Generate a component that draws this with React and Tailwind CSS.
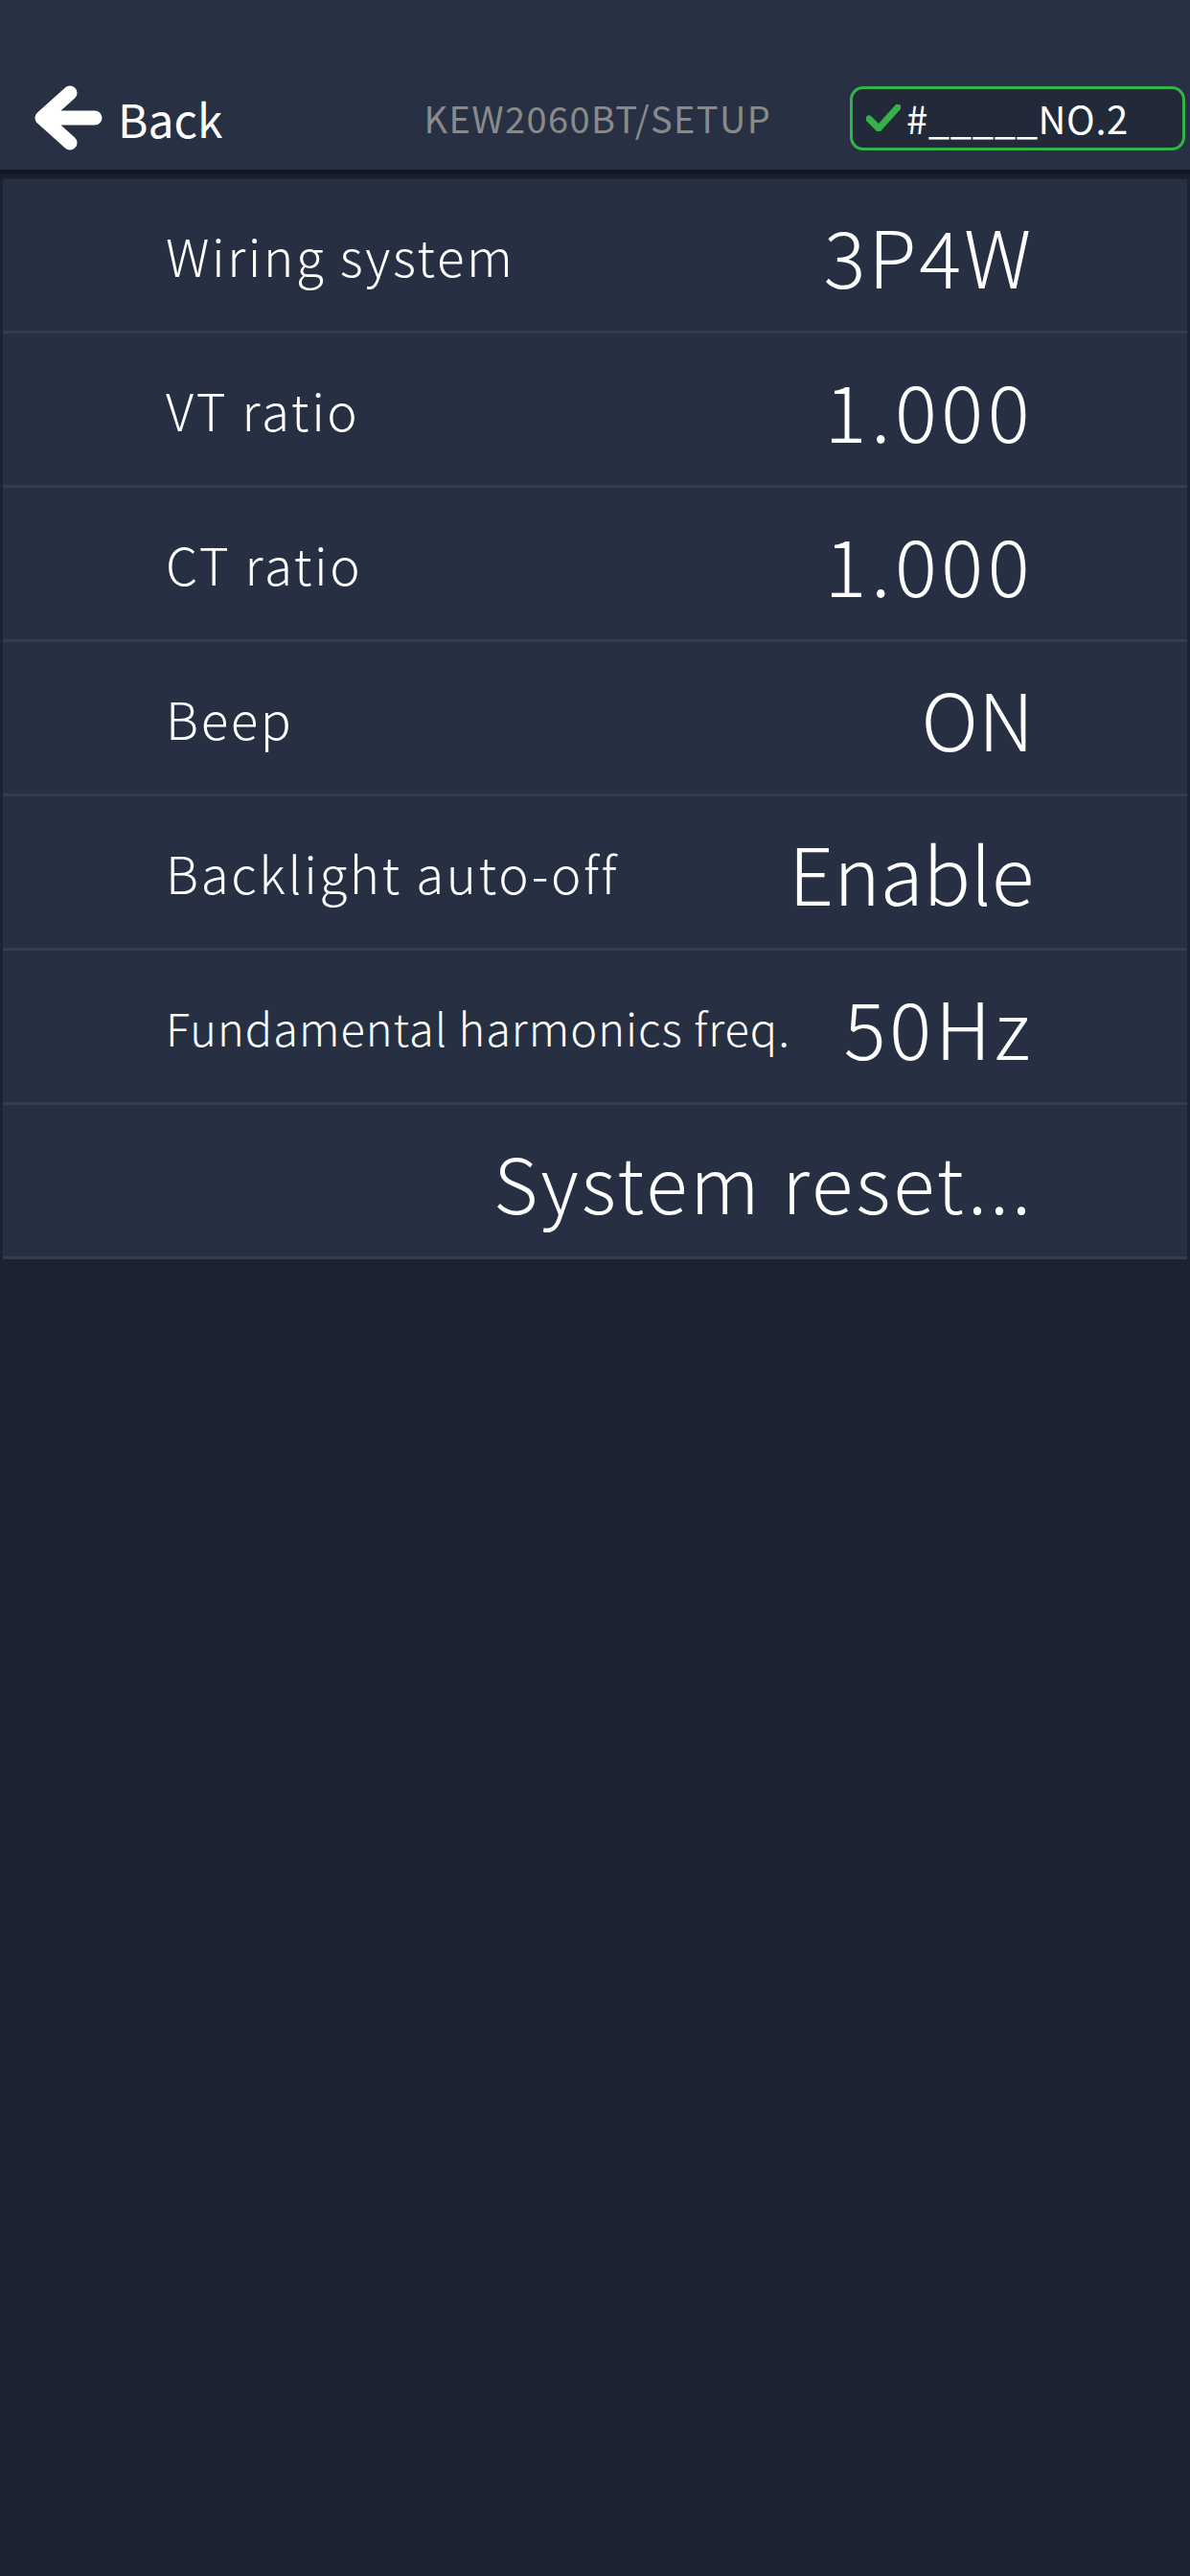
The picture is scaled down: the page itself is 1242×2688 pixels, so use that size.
import { Fragment } from "react";

const rows = [
  { label: "Wiring system", value: "3P4W", track: "tracking-[2.8px]" },
  { label: "VT ratio", value: "1.000", track: "tracking-[4.5px]" },
  { label: "CT ratio", value: "1.000", track: "tracking-[4.5px]" },
  { label: "Beep", value: "ON", track: "tracking-[0px]" },
  { label: "Backlight auto-off", value: "Enable", track: "tracking-[0px]" },
  {
    label: "Fundamental harmonics freq.",
    value: "50Hz",
    track: "tracking-[3.8px]",
    small: true,
  },
];

function BackArrow() {
  return (
    <svg width="72" height="70" viewBox="0 0 72 70" className="shrink-0">
      <path
        d="M9 35 H64 M38 9 L9 35 L38 61"
        fill="none"
        stroke="#ffffff"
        strokeWidth="15"
        strokeLinecap="round"
        strokeLinejoin="round"
      />
    </svg>
  );
}

function Check() {
  return (
    <svg width="36" height="28" viewBox="0 0 36 28" className="shrink-0">
      <path
        d="M3 15 L13 25 L33 3"
        fill="none"
        stroke="#34b34a"
        strokeWidth="7"
        strokeLinecap="round"
        strokeLinejoin="round"
      />
    </svg>
  );
}

export default function App() {
  return (
    <div
      className="flex min-h-[2688px] w-[1242px] flex-col bg-[#1b2232] text-white"
      style={{ fontFamily: '"Noto Sans CJK JP", "Noto Sans", sans-serif' }}
    >
      {/* Header */}
      <div className="flex h-[177px] items-center bg-[#283143] pt-[69px]">
        <div className="flex h-[108px] w-full items-center">
          <div className="ml-[35px] flex items-center gap-[16px]">
            <BackArrow />
            <span className="text-[48px] leading-none">Back</span>
          </div>
          <span className="ml-[210px] text-[38px] leading-none tracking-[1.4px] text-[#8a8a8a]">
            KEW2060BT/SETUP
          </span>
          <div className="ml-auto mr-[5px] flex h-[67px] w-[350px] items-center gap-[6px] rounded-[14px] border-[3px] border-[#34b34a] bg-[#222a3a] pl-[14px]">
            <Check />
            <span className="text-[40px] leading-none tracking-[0.6px]">#_____NO.2</span>
          </div>
        </div>
      </div>
      <div className="h-[10px] bg-gradient-to-b from-[#11161f] to-[#1b2232]" />

      {/* Settings list */}
      <div className="mx-[3px] flex flex-col">
        {rows.map(({ label, value, small, track }) => (
          <Fragment key={label}>
            <div className="flex h-[158px] items-center justify-between bg-[#273043] pl-[170px] pr-[160px]">
              <span
                className={
                  small
                    ? "text-[47px] font-light leading-none tracking-[1px]"
                    : "text-[53px] font-light leading-none tracking-[2.6px]"
                }
              >
                {label}
              </span>
              <span className={`text-[82px] font-light leading-none ${track}`}>
                {value}
              </span>
            </div>
            <div className="h-[3px] bg-[#333d50]" />
          </Fragment>
        ))}
        <div className="flex h-[158px] items-center justify-end bg-[#273043] pr-[160px]">
          <span className="text-[80px] font-light leading-none tracking-[3px]">
            System reset...
          </span>
        </div>
        <div className="h-[3px] bg-[#333d50]" />
      </div>
    </div>
  );
}
